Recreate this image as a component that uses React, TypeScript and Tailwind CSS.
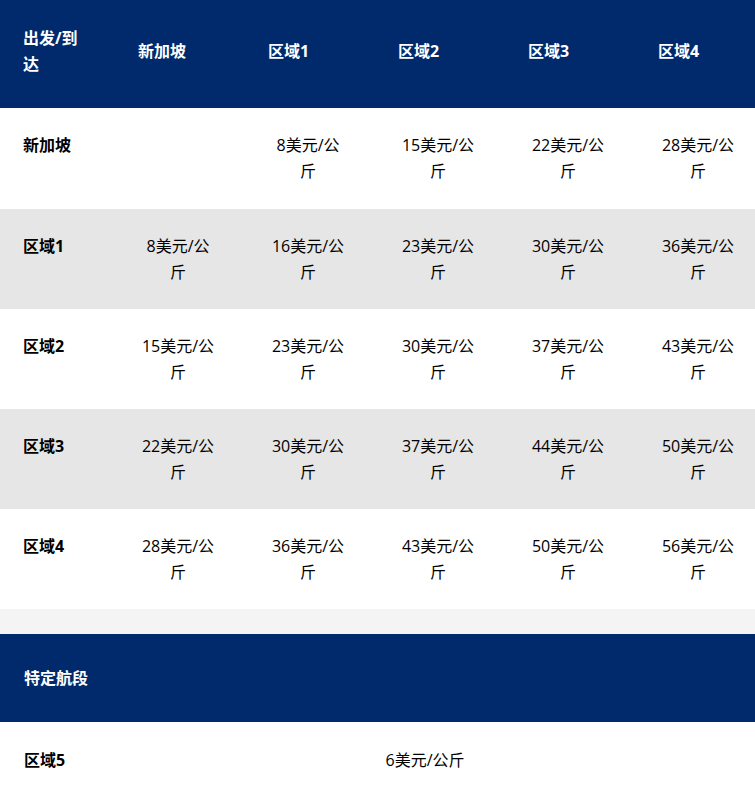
import React from "react";

const cols = ["新加坡", "区域1", "区域2", "区域3", "区域4"];
const rows: { label: string; vals: string[] }[] = [
  { label: "新加坡", vals: ["", "8", "15", "22", "28"] },
  { label: "区域1", vals: ["8", "16", "23", "30", "36"] },
  { label: "区域2", vals: ["15", "23", "30", "37", "43"] },
  { label: "区域3", vals: ["22", "30", "37", "44", "50"] },
  { label: "区域4", vals: ["28", "36", "43", "50", "56"] },
];

export default function App() {
  return (
    <div
      className="w-[755px] overflow-hidden bg-white text-[16px] leading-[26px] text-black"
      style={{ fontFamily: '"Open Sans", "Noto Sans CJK SC", sans-serif' }}
    >
      <table className="table-fixed border-collapse w-[763px]">
        <colgroup>
          <col className="w-[113px]" />
          <col className="w-[130px]" />
          <col className="w-[130px]" />
          <col className="w-[130px]" />
          <col className="w-[130px]" />
          <col className="w-[130px]" />
        </colgroup>
        <thead>
          <tr className="bg-[#002a6c] text-white">
            <th className="pl-[23px] pr-[23px] pt-[25px] pb-[31px] text-left align-middle font-bold">
              出发/到达
            </th>
            {cols.map((c) => (
              <th
                key={c}
                className="pl-[25px] pr-[10px] pt-[25px] pb-[31px] text-left align-middle font-bold"
              >
                {c}
              </th>
            ))}
          </tr>
        </thead>
        <tbody>
          {rows.map((r, i) => (
            <tr key={r.label} className={i % 2 === 1 ? "bg-[#e6e6e6]" : "bg-white"}>
              <td
                className={
                  i === 0
                    ? "pl-[23px] pt-[24px] pb-[25px] h-[101px] align-top font-bold"
                    : "pl-[23px] pt-[24px] pb-[24px] h-[100px] align-top font-bold"
                }
              >
                {r.label}
              </td>
              {r.vals.map((v, j) => (
                <td key={j} className="pt-[24px] pb-[24px] align-top text-center">
                  {v && <div className="mx-auto w-[76px]">{v}美元/公斤</div>}
                </td>
              ))}
            </tr>
          ))}
        </tbody>
      </table>
      <div className="h-[25px] bg-[#f4f4f4]" />
      <div className="h-[88px] bg-[#002a6c] flex items-center pl-[24px] font-bold text-white">
        特定航段
      </div>
      <div className="flex pt-[25px] pb-[24px]">
        <div className="w-[95px] pl-[24px] font-bold">区域5</div>
        <div className="flex-1 text-center">6美元/公斤</div>
      </div>
    </div>
  );
}
